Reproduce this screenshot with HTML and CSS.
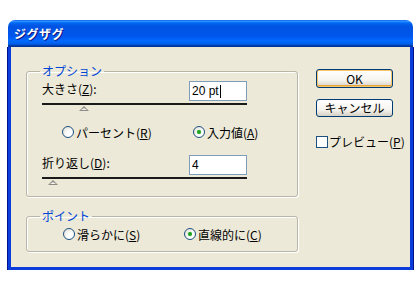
FILE: index.html
```html
<!DOCTYPE html>
<html lang="ja">
<head>
    <meta charset="UTF-8">
    <title>ジグザグ</title>
    <link rel="stylesheet" href="styles.css">
</head>
<body>
    <div class="window">
        <div class="titlebar">
            <span class="title">ジグザグ</span>
        </div>
        <div class="client">
            <div class="left">
                <fieldset class="group group-options">
                    <legend>オプション</legend>
                    <div class="field field-first">
                        <label>大きさ(<u>Z</u>):</label>
                        <span class="textbox">20 pt<span class="caret"></span></span>
                    </div>
                    <div class="slider"><span class="thumb" style="left: 37px;"></span></div>

                    <div class="radios radios-options">
                        <span class="radio"><span class="circle"></span>パーセント(<u>R</u>)</span>
                        <span class="radio"><span class="circle checked"></span>入力値(<u>A</u>)</span>
                    </div>

                    <div class="field field-second">
                        <label>折り返し(<u>D</u>):</label>
                        <span class="textbox">4</span>
                    </div>
                    <div class="slider"><span class="thumb" style="left: 6px;"></span></div>
                </fieldset>

                <fieldset class="group group-points">
                    <legend>ポイント</legend>
                    <div class="radios radios-points">
                        <span class="radio"><span class="circle"></span>滑らかに(<u>S</u>)</span>
                        <span class="radio"><span class="circle checked"></span>直線的に(<u>C</u>)</span>
                    </div>
                </fieldset>
            </div>

            <div class="right">
                <button class="btn btn-default">OK</button>
                <button class="btn">キャンセル</button>
                <span class="check"><span class="box"></span>プレビュー(<u>P</u>)</span>
            </div>
        </div>
    </div>
</body>
</html>
```

FILE: styles.css
```css
body {
    margin: 0;
    background: #ffffff;
    font-family: "Noto Sans CJK JP", sans-serif;
    font-size: 12px;
    color: #000;
}
.window {
    margin: 20px 0 0 8px;
    width: 405px;
    height: 250px;
    display: flex;
    flex-direction: column;
}
.titlebar {
    height: 27px;
    border-radius: 7px 7px 0 0;
    background: linear-gradient(to bottom, #0058ee 0%, #3593ff 4%, #288eff 6%, #127dff 8%, #036ffc 10%, #0262ee 14%, #0057e5 20%, #0054e3 24%, #0055eb 56%, #005bf5 66%, #026afe 76%, #0062ef 86%, #0052d6 92%, #0040ab 94%, #003092 100%);
    display: flex;
    align-items: center;
    padding-left: 6px;
}
.title {
    color: #fff;
    font-weight: bold;
    font-size: 12px;
    text-shadow: 1px 1px #0a1883;
    letter-spacing: 0.5px;
}
.client {
    flex: 1;
    background: #ece9d8;
    border: 3px solid #0b3ddb;
    border-top: none;
    box-shadow: 1px 0 #00138c, -1px 0 #00138c, 0 1px #00138c;
    display: flex;
    padding: 17px 0 0 15px;
}
.left {
    width: 272px;
}
.group {
    margin: 0;
    border: 1px solid #b8b6a8;
    border-radius: 3px;
    box-shadow: inset 1px 1px #fff, 1px 1px #fff;
    padding: 0 0 0 15px;
}
.group legend {
    color: #0046d5;
    padding: 0 2px;
    margin-left: -2px;
    line-height: 14px;
    font-size: 12px;
}
.group-options {
    height: 133px;
    box-sizing: border-box;
    padding-top: 3px;
}
.group-points {
    margin-top: 12px;
    height: 43px;
    box-sizing: border-box;
    padding-top: 4px;
}
.field {
    width: 205px;
    display: flex;
    align-items: center;
    justify-content: space-between;
    height: 20px;
}
.field label {
    margin-top: -5px;
}
.field-second {
    margin-top: 16px;
}
.textbox {
    width: 54px;
    height: 18px;
    border: 1px solid #7f9db9;
    background: #fff;
    font-family: "Liberation Sans", Arial, sans-serif;
    font-size: 12px;
    line-height: 18px;
    padding-left: 2px;
    display: flex;
    align-items: center;
}
.caret {
    display: inline-block;
    width: 1px;
    height: 13px;
    background: #000;
    margin-left: 1px;
}
.slider {
    position: relative;
    width: 205px;
    height: 9px;
    margin-top: 2px;
    border-top: 2px solid #1a1a1a;
    box-sizing: border-box;
}
.thumb {
    position: absolute;
    top: 1px;
    width: 0;
    height: 0;
    border-left: 5px solid transparent;
    border-right: 5px solid transparent;
    border-bottom: 5px solid #8c8c84;
}
.thumb::after {
    content: "";
    position: absolute;
    left: -3px;
    top: 2px;
    border-left: 3px solid transparent;
    border-right: 3px solid transparent;
    border-bottom: 2px solid #f4f3ee;
}
.radios {
    display: flex;
    height: 14px;
    align-items: center;
}
.radios-options {
    margin-top: 13px;
    padding-left: 20px;
}
.radios-options .radio:first-child {
    width: 131px;
}
.radios-points {
    padding-left: 21px;
}
.radios-points .radio:first-child {
    width: 121px;
}
.radio, .check {
    display: flex;
    align-items: center;
    white-space: nowrap;
}
.circle {
    flex: none;
    width: 12px;
    height: 12px;
    border: 1px solid #1c5180;
    border-radius: 50%;
    background: radial-gradient(circle at 70% 70%, #fff 0%, #fff 30%, #dcd8cc 100%);
    box-sizing: border-box;
    margin-right: 2px;
    position: relative;
}
.circle.checked::after {
    content: "";
    position: absolute;
    left: 3px;
    top: 3px;
    width: 4px;
    height: 4px;
    border-radius: 50%;
    background: #21a121;
    box-shadow: 0 0 1px #5fd35f;
}
.right {
    width: 77px;
    margin-left: 18px;
    display: flex;
    flex-direction: column;
    padding-top: 5px;
}
.btn {
    font-family: "Noto Sans CJK JP", sans-serif;
    font-size: 12px;
    height: 19px;
    padding: 0;
    border: 1px solid #003c74;
    border-radius: 3px;
    background: linear-gradient(to bottom, #ffffff 0%, #f5f4ef 60%, #d6d0c5 100%);
    color: #000;
    line-height: 14px;
}
.btn-default {
    box-shadow: inset 0 0 0 1px #f5c56a, inset 0 -1px 0 1px #e5a33b;
}
.btn + .btn {
    margin-top: 11px;
    height: 18px;
}
.check {
    margin-top: 16px;
}
.box {
    flex: none;
    width: 12px;
    height: 12px;
    border: 1px solid #1c5180;
    background: #fff;
    box-sizing: border-box;
    margin-right: 1px;
}
```
